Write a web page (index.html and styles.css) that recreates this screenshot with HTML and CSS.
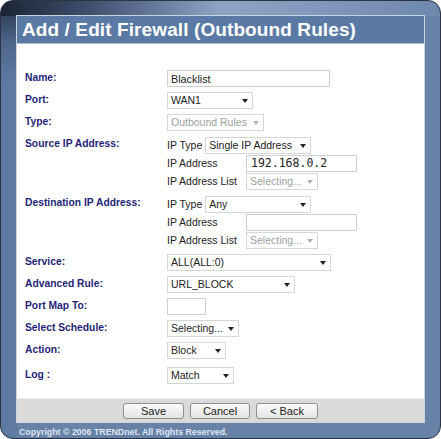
FILE: index.html
```html
<!DOCTYPE html>
<html lang="en">
<head>
  <meta charset="UTF-8" />
  <title>Add / Edit Firewall (Outbound Rules)</title>
  <link rel="stylesheet" href="styles.css">
</head>
<body>
  <div class="frame">
    <div class="panel">
      <h1 class="panel-title">Add / Edit Firewall (Outbound Rules)</h1>

      <form class="rules">
        <div class="field">
          <label class="field-label" for="name">Name:</label>
          <input class="text w-name" type="text" id="name" value="Blacklist" />
        </div>

        <div class="field">
          <label class="field-label">Port:</label>
          <span class="select w-port">WAN1</span>
        </div>

        <div class="field">
          <label class="field-label">Type:</label>
          <span class="select disabled w-type">Outbound Rules</span>
        </div>

        <div class="field">
          <label class="field-label">Source IP Address:</label>
          <div class="group">
            <div class="sub">
              <span class="sub-label short">IP Type</span>
              <span class="select w-iptype">Single IP Address</span>
            </div>
            <div class="sub">
              <span class="sub-label">IP Address</span>
              <input class="text mono w-ip" type="text" value="192.168.0.2" />
            </div>
            <div class="sub">
              <span class="sub-label">IP Address List</span>
              <span class="select disabled w-list">Selecting...</span>
            </div>
          </div>
        </div>

        <div class="field">
          <label class="field-label">Destination IP Address:</label>
          <div class="group">
            <div class="sub">
              <span class="sub-label short">IP Type</span>
              <span class="select w-iptype">Any</span>
            </div>
            <div class="sub">
              <span class="sub-label">IP Address</span>
              <input class="text mono w-ip" type="text" value="" />
            </div>
            <div class="sub">
              <span class="sub-label">IP Address List</span>
              <span class="select disabled w-list">Selecting...</span>
            </div>
          </div>
        </div>

        <div class="field">
          <label class="field-label">Service:</label>
          <span class="select w-service">ALL(ALL:0)</span>
        </div>

        <div class="field">
          <label class="field-label">Advanced Rule:</label>
          <span class="select w-adv">URL_BLOCK</span>
        </div>

        <div class="field">
          <label class="field-label">Port Map To:</label>
          <input class="text w-portmap" type="text" value="" />
        </div>

        <div class="field">
          <label class="field-label">Select Schedule:</label>
          <span class="select w-sched">Selecting...</span>
        </div>

        <div class="field">
          <label class="field-label">Action:</label>
          <span class="select w-action">Block</span>
        </div>

        <div class="field log">
          <label class="field-label">Log :</label>
          <span class="select w-log">Match</span>
        </div>
      </form>

      <div class="actions">
        <button type="button" class="btn w-save">Save</button>
        <button type="button" class="btn w-cancel">Cancel</button>
        <button type="button" class="btn w-back">&lt; Back</button>
      </div>
    </div>

    <p class="copyright">Copyright © 2006 TRENDnet. All Rights Reserved.</p>
  </div>
</body>
</html>
```

FILE: styles.css
```css
body {
  margin: 0;
  font-family: "Liberation Sans", Arial, sans-serif;
  background: #fff;
}

.frame {
  box-sizing: border-box;
  width: 441px;
  height: 439px;
  padding: 14px 15px 0 15px;
  border: 1px solid #2a3444;
  border-radius: 13px;
  background:
    linear-gradient(90deg, #1b2435 0, #3d506c 20%, #8ea4c3 50%, #8199bb 70%, #6e88ad 100%) top / 100% 15px no-repeat,
    linear-gradient(180deg, #243045 0, #4c6488 40px, #5f7aa1 80px) left / 16px 100% no-repeat,
    #6781a7;
  display: flex;
  flex-direction: column;
}

.panel {
  height: 406px;
  border: 1px solid #c9d5e3;
  background: #fff;
  display: flex;
  flex-direction: column;
}

.panel-title {
  margin: 0;
  height: 27px;
  line-height: 28px;
  padding-left: 5px;
  background: #5a7aa5;
  border-bottom: 1px solid #aebfd4;
  color: #fff;
  font-size: 19px;
  font-weight: bold;
  letter-spacing: 0.1px;
}

.rules {
  flex: 1;
  padding: 26px 0 0 8px;
}

.field {
  display: flex;
  align-items: flex-start;
  margin-bottom: 5px;
}

.field.log {
  margin-top: 8px;
}

.field-label {
  width: 142px;
  flex: none;
  padding-top: 2px;
  font-size: 10.3px;
  font-weight: bold;
  color: #1f1f78;
}

.text {
  box-sizing: border-box;
  height: 17px;
  margin: 0;
  padding: 0 3px;
  border: 1px solid #cfcfcf;
  font-family: inherit;
  font-size: 10.8px;
  color: #222;
  background: #fff;
}

.mono {
  font-family: "DejaVu Sans Mono", "Liberation Mono", monospace;
  font-size: 11.5px;
  padding-left: 4px;
}

.select {
  position: relative;
  box-sizing: border-box;
  display: inline-block;
  height: 17px;
  line-height: 15px;
  padding-left: 3px;
  border: 1px solid #d6d6d6;
  background: #fff;
  font-size: 10.5px;
  color: #222;
  white-space: nowrap;
}

.select::after {
  content: "";
  position: absolute;
  right: 4px;
  top: 6px;
  border-left: 3px solid transparent;
  border-right: 3px solid transparent;
  border-top: 4px solid #222;
}

.select.disabled {
  color: #a0a0a0;
}

.select.disabled::after {
  border-top-color: #b0b0b0;
}

.group {
  display: flex;
  flex-direction: column;
}

.sub {
  display: flex;
  align-items: center;
  height: 18px;
}

.sub-label {
  width: 79px;
  font-size: 10.5px;
  color: #222;
}

.sub-label.short {
  width: auto;
  margin-right: 3px;
}

.w-name { width: 163px; }
.w-port { width: 86px; }
.w-type { width: 97px; }
.w-iptype { width: 106px; }
.w-ip { width: 111px; }
.w-list { width: 72px; }
.w-service { width: 164px; }
.w-adv { width: 128px; }
.w-portmap { width: 39px; }
.w-sched { width: 72px; }
.w-action { width: 59px; }
.w-log { width: 67px; }

.actions {
  height: 23px;
  border-top: 1px solid #ececec;
  background: #dadada;
  display: flex;
  justify-content: center;
  align-items: center;
  gap: 6px;
}

.btn {
  height: 16px;
  padding: 0;
  border: 1px solid #8f8f8f;
  border-radius: 3px;
  background: linear-gradient(#fbfbfb, #e4e4e4);
  font-family: inherit;
  font-size: 11px;
  color: #222;
  line-height: 14px;
}

.w-save { width: 61px; }
.w-cancel { width: 60px; }
.w-back { width: 62px; }

.copyright {
  margin: 0;
  padding: 4px 0 0 3px;
  font-size: 8.8px;
  font-weight: bold;
  color: #dde6f2;
}
```
